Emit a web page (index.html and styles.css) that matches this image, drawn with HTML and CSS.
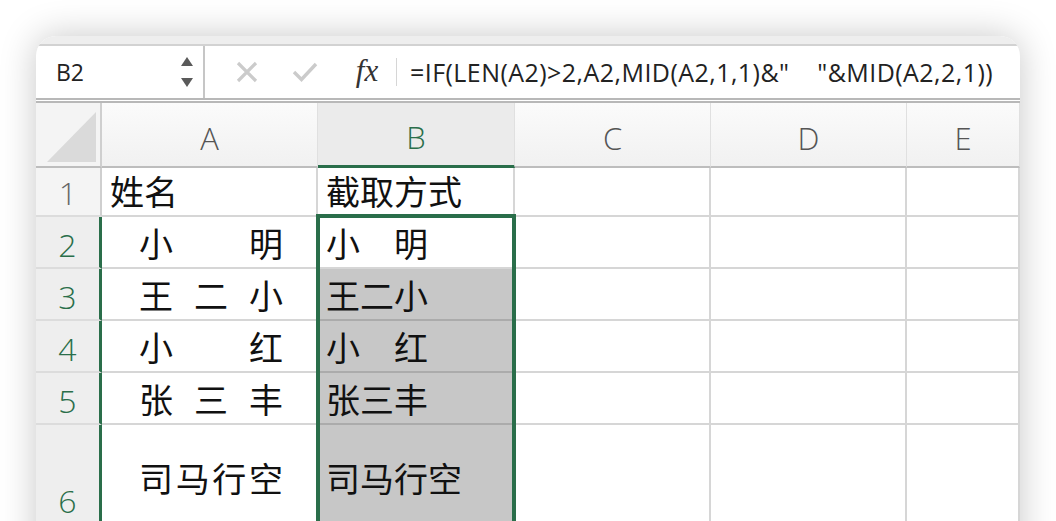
FILE: index.html
```html
<!DOCTYPE html>
<html>
	<head>
		<meta charset="UTF-8">
		<title>截取方式</title>
		<link rel="stylesheet" href="styles.css">
	</head>
	<body>
		<div class="window">
			<div class="titlebar"></div>
			<!-- 编辑栏 -->
			<div class="formula-bar">
				<div class="name-box">
					<span class="ref">B2</span>
					<svg class="spin" width="14" height="32" viewBox="0 0 14 32">
						<path d="M7 1 L13 10 L1 10 Z" fill="#5a5a5a"/>
						<path d="M1 22 L13 22 L7 31 Z" fill="#5a5a5a"/>
					</svg>
				</div>
				<svg class="btn cancel" width="22" height="22" viewBox="0 0 22 22">
					<path d="M2 2 L20 20 M20 2 L2 20" stroke="#cbcbcb" stroke-width="3.2" stroke-linecap="butt"/>
				</svg>
				<svg class="btn enter" width="26" height="22" viewBox="0 0 26 22">
					<path d="M2 11 L9.5 18.5 L24 3" stroke="#cbcbcb" stroke-width="3.4" fill="none"/>
				</svg>
				<span class="fx">fx</span>
				<span class="sep"></span>
				<div class="formula">=IF(LEN(A2)&gt;2,A2,MID(A2,1,1)&amp;"&nbsp;&nbsp;&nbsp;&nbsp;"&amp;MID(A2,2,1))</div>
			</div>
			<!-- 表格 -->
			<div class="sheet">
				<div class="corner"><span class="tri"></span></div>
				<div class="col-head">A</div>
				<div class="col-head active">B</div>
				<div class="col-head">C</div>
				<div class="col-head">D</div>
				<div class="col-head">E</div>

				<div class="row-head">1</div>
				<div class="cell">姓名</div>
				<div class="cell">截取方式</div>
				<div class="cell"></div>
				<div class="cell"></div>
				<div class="cell"></div>

				<div class="row-head active">2</div>
				<div class="cell dist"><span>小</span><span>明</span></div>
				<div class="cell">小　明</div>
				<div class="cell"></div>
				<div class="cell"></div>
				<div class="cell"></div>

				<div class="row-head active">3</div>
				<div class="cell dist"><span>王</span><span>二</span><span>小</span></div>
				<div class="cell fill">王二小</div>
				<div class="cell"></div>
				<div class="cell"></div>
				<div class="cell"></div>

				<div class="row-head active">4</div>
				<div class="cell dist"><span>小</span><span>红</span></div>
				<div class="cell fill">小　红</div>
				<div class="cell"></div>
				<div class="cell"></div>
				<div class="cell"></div>

				<div class="row-head active">5</div>
				<div class="cell dist"><span>张</span><span>三</span><span>丰</span></div>
				<div class="cell fill">张三丰</div>
				<div class="cell"></div>
				<div class="cell"></div>
				<div class="cell"></div>

				<div class="row-head active">6</div>
				<div class="cell dist mid"><span>司</span><span>马</span><span>行</span><span>空</span></div>
				<div class="cell fill mid">司马行空</div>
				<div class="cell"></div>
				<div class="cell"></div>
				<div class="cell"></div>

				<div class="selection"></div>
			</div>
		</div>
	</body>
</html>
```

FILE: styles.css
```css
body{
	margin: 0;
	padding: 0;
	background: #fff;
	overflow: hidden;
}
.window{
	margin: 36px 0 0 36px;
	width: 984px;
	height: 560px;
	border-radius: 20px 20px 0 0;
	overflow: hidden;
	background: #fff;
	box-shadow: 0 0 36px rgba(0,0,0,0.22);
}
.titlebar{
	height: 8px;
	background: #eeeeee;
	border-bottom: 2px solid #d2d2d2;
}
/* 编辑栏 */
.formula-bar{
	display: flex;
	align-items: center;
	height: 52px;
	border-bottom: 5px double #b8b8b8;
	font-family: "Open Sans", "Noto Sans", sans-serif;
	color: #222;
}
.name-box{
	box-sizing: border-box;
	width: 169px;
	height: 100%;
	display: flex;
	align-items: center;
	padding-left: 20px;
	border-right: 2px solid #c6c6c6;
}
.ref{
	font-size: 23px;
}
.spin{
	margin-left: auto;
	margin-right: 9px;
}
.cancel{
	margin-left: 31px;
}
.enter{
	margin-left: 34px;
}
.fx{
	display: inline-block;
	width: 30px;
	margin-left: 34px;
	text-align: center;
	font-family: "Liberation Serif", serif;
	font-style: italic;
	font-size: 31px;
	color: #333;
	line-height: 1;
	margin-top: -4px;
}
.sep{
	width: 1px;
	height: 28px;
	margin-left: 14px;
	background: #d6d6d6;
}
.formula{
	margin-left: 13px;
	font-size: 25px;
	white-space: nowrap;
	letter-spacing: 0.45px;
}
/* 表格 */
.sheet{
	position: relative;
	display: grid;
	grid-template-columns: 66px 216px 197px 196px 196px 113px;
	grid-template-rows: 65px 49px 52px 52px 52px 52px 100px;
	font-family: "Noto Sans CJK SC", sans-serif;
}
.corner{
	box-sizing: border-box;
	background: #f4f4f4;
	border-right: 2px solid #cfcfcf;
	border-bottom: 2px solid #bdbdbd;
	padding: 9px 4px 4px 11px;
}
.tri{
	display: block;
	width: 100%;
	height: 100%;
	background: #dadada;
	clip-path: polygon(100% 0, 100% 100%, 0 100%);
}
.col-head{
	box-sizing: border-box;
	display: flex;
	align-items: center;
	justify-content: center;
	padding-top: 6px;
	background: linear-gradient(#fbfbfb, #f1f1f1);
	border-right: 1px solid #e0e0e0;
	border-bottom: 2px solid #bdbdbd;
	font-family: "Open Sans", sans-serif;
	font-weight: 300;
	font-size: 31px;
	color: #555;
}
.col-head.active{
	background: #ebebeb;
	color: #2a6e4a;
	border-bottom: 3px solid #2a6e4a;
}
.row-head{
	box-sizing: border-box;
	display: flex;
	align-items: flex-end;
	justify-content: center;
	padding-bottom: 3px;
	background: #f4f4f4;
	border-right: 2px solid #cfcfcf;
	border-bottom: 2px solid #dcdcdc;
	font-family: "Open Sans", sans-serif;
	font-weight: 300;
	font-size: 32px;
	line-height: 1.2;
	color: #666;
}
.row-head.active{
	background: #eeeeee;
	color: #2a6e4a;
	border-right: 3px solid #2a6e4a;
}
.cell{
	box-sizing: border-box;
	display: flex;
	align-items: flex-end;
	padding: 0 0 3px 8px;
	border-right: 2px solid #d6d6d6;
	border-bottom: 2px solid #d6d6d6;
	font-size: 34px;
	line-height: 1.25;
	color: #111;
	white-space: nowrap;
}
.cell.dist{
	justify-content: space-between;
	padding-left: 37px;
	padding-right: 33px;
}
.cell.mid{
	align-items: center;
	padding-top: 12px;
}
.cell.fill{
	background: #c7c7c7;
	border-bottom-color: #ababab;
}
/* 选中区域边框 */
.selection{
	position: absolute;
	grid-column: 3 / 4;
	grid-row: 3 / 8;
	top: -3px;
	bottom: 0;
	left: -2px;
	right: -1px;
	border: 4px solid #2a6e4a;
	pointer-events: none;
}
```
